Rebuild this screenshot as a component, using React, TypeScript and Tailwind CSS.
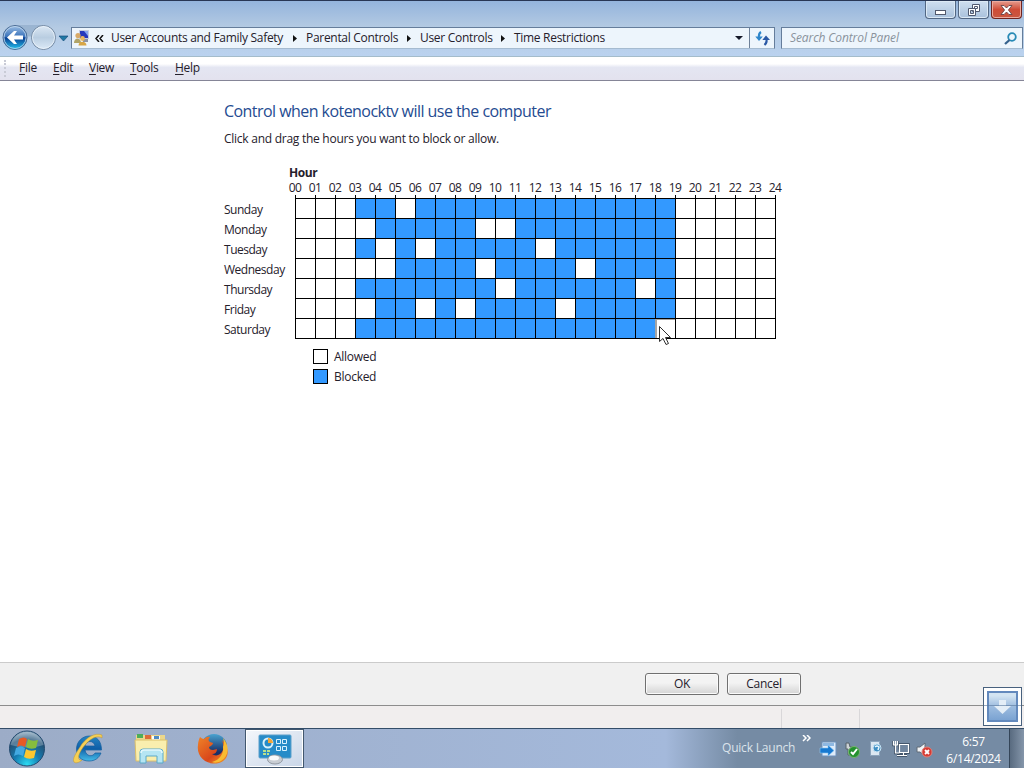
import React from 'react';

const HOURS = Array.from({ length: 25 }, (_, i) => i);

// allowed hours inside the blocked 03-19 range
const DAYS = [
  { name: 'Sunday', allowed: [5] },
  { name: 'Monday', allowed: [3, 9, 10] },
  { name: 'Tuesday', allowed: [4, 6, 12] },
  { name: 'Wednesday', allowed: [3, 4, 9, 14] },
  { name: 'Thursday', allowed: [10, 17] },
  { name: 'Friday', allowed: [3, 6, 8, 13] },
  { name: 'Saturday', allowed: [18] },
];

const CRUMBS = [
  { label: 'User Accounts and Family Safety', width: 'w-[195px]' },
  { label: 'Parental Controls', width: 'w-[114px]' },
  { label: 'User Controls', width: 'w-[94px]' },
  { label: 'Time Restrictions', width: 'w-[110px]' },
];

const MENU = [
  { label: 'File', width: 'w-[34px]' },
  { label: 'Edit', width: 'w-[36px]' },
  { label: 'View', width: 'w-[41px]' },
  { label: 'Tools', width: 'w-[45px]' },
  { label: 'Help', width: 'w-[40px]' },
];

const isBlocked = (hour: number, allowed: number[]) => hour >= 3 && hour < 19 && !allowed.includes(hour);

const UsersIcon = () => (
  <svg width="16" height="16" viewBox="0 0 16 16">
    <rect x="5.500" y=".5" width="9" height="8" fill="#2638bd" stroke="#c4cbe0" />
    <path d="M10 1h4v5z" fill="#87a5ee" />
    <path d="M9 9h5v3H9z" fill="#8d94a5" />
    <circle cx="4" cy="5.500" r="2.600" fill="#d8aa68" />
    <path d="M0 13c0-6 7-6 7 0z" fill="#b0a468" />
    <circle cx="8.500" cy="8.500" r="2.400" fill="#eab65e" />
    <path d="M4.500 15.500c0-5 8-5 8 0z" fill="#d7a545" />
  </svg>
);

const NavButtons = () => (
  <svg width="70" height="30" viewBox="0 0 70 30">
    <defs>
      <linearGradient id="back" x2="0" y2="1">
        <stop stopColor="#9dbfe4" />
        <stop offset=".46" stopColor="#3b73bb" />
        <stop offset=".52" stopColor="#093f92" />
        <stop offset="1" stopColor="#25c5f0" />
      </linearGradient>
      <linearGradient id="forward" x2="0" y2="1">
        <stop stopColor="#dce8f4" />
        <stop offset=".5" stopColor="#b9cde1" />
        <stop offset="1" stopColor="#dceaf7" />
      </linearGradient>
    </defs>
    <path d="M15 3h28v8q-14 7-28 0z" fill="#8da9c8" opacity=".65" />
    <circle cx="15" cy="15.500" r="12" fill="url(#back)" stroke="#4a6b95" />
    <circle cx="15" cy="15.500" r="11" fill="none" stroke="#c5dbef" strokeWidth=".8" />
    <path d="M7 15.500l7-6.500h3l-3 4.500h9v4h-9l3 4.500h-3z" fill="#fff" />
    <circle cx="43.500" cy="15.500" r="12" fill="url(#forward)" stroke="#7288a2" />
    <circle cx="43.500" cy="15.500" r="11" fill="none" stroke="#edf5fb" strokeWidth=".8" />
    <path d="M59 14h9l-4.500 5z" fill="#2079a5" stroke="#174e7d" strokeWidth=".7" />
  </svg>
);

const WindowButtons = () => (
  <div className="flex h-[18px] gap-[2px]">
    <div className="flex h-[18px] w-[31px] items-end justify-center rounded-b border border-t-0 border-[#526783] bg-linear-to-b from-[#cfdff0] to-[#a9c1dc] pb-[3px] shadow-[inset_0_0_0_1px_#dce9f5]">
      <div className="h-[5px] w-[11px] border border-[#52596c] bg-white" />
    </div>
    <div className="flex h-[18px] w-[31px] items-center justify-center rounded-b border border-t-0 border-[#526783] bg-linear-to-b from-[#cfdff0] to-[#a9c1dc] shadow-[inset_0_0_0_1px_#dce9f5]">
      <svg width="12" height="12" viewBox="0 0 12 12" fill="#fff" stroke="#505a70">
        <path d="M4.500 .5h7v7h-7zM6.500 2.500h3v2h-3z" />
        <path d="M.5 4.500h7v7h-7zM2.500 6.500h3v3h-3z" fillRule="evenodd" />
      </svg>
    </div>
    <div className="flex h-[18px] w-[31px] items-center justify-center rounded-b border border-t-0 border-[#70241f] bg-linear-to-b from-[#e59b8e] via-[#cf4c37] to-[#c95741] shadow-[inset_0_0_0_1px_#ecaa9e]">
      <svg width="13" height="12" viewBox="0 0 13 12">
        <path d="M1 1.500h3l2.500 2.500L9 1.500h3L8.400 6l3.600 4.500H9L6.500 8 4 10.500H1L4.600 6z" fill="#fff" stroke="#58393e" strokeWidth=".8" />
      </svg>
    </div>
  </div>
);

const RefreshIcon = () => (
  <svg width="15" height="15" viewBox="0 0 15 15" fill="none" strokeWidth="2.200">
    <path d="M6 1Q3.500 2.500 4 6" stroke="#2d86cb" /><path d="M.3 5.500h7.500L4 10z" fill="#2d86cb" />
    <path d="M9.500 14q2.500-2 2-5" stroke="#2a58a5" /><path d="M7.300 9h7.700L11 4.500z" fill="#2a58a5" />
  </svg>
);

const StartOrb = () => (
  <svg width="40" height="40" viewBox="0 0 40 40">
    <defs>
      <radialGradient id="orb" cx=".5" cy=".95" r=".95">
        <stop stopColor="#2bdbf2" /><stop offset=".4" stopColor="#157bb1" /><stop offset=".75" stopColor="#245174" /><stop offset="1" stopColor="#a0b8ca" />
      </radialGradient>
    </defs>
    <circle cx="20" cy="19.500" r="17.500" fill="url(#orb)" stroke="#244b70" />
    <path d="M3.500 16a17 17 0 0 1 33 0q-15 5-33 0" fill="#d7e5ee" opacity=".3" />
    <path d="M12 10q5-3 8 0l-2 8q-4-3-8 0z" fill="#e65a25" />
    <path d="M21 10q4 3 10 1l-2 8q-6 2-10-1z" fill="#86bd3e" />
    <path d="M9 19q5-3 9 0l-2 8q-5-3-9 0z" fill="#43a9e1" />
    <path d="M19 20q4 3 10 1l-2 8q-6 2-10-1z" fill="#fcc72f" />
  </svg>
);

const ExplorerE = () => (
  <svg width="34" height="32" viewBox="0 0 34 32">
    <defs>
      <linearGradient id="ie" x2="0" y2="1"><stop stopColor="#2585c4" /><stop offset=".5" stopColor="#0f5fa8" /><stop offset="1" stopColor="#45bce8" /></linearGradient>
    </defs>
    <path fillRule="evenodd" d="M17.500 3c7.500 0 12 5.500 12 14H13c1 7 8 7 10 3h6c-2 5-6 8-12 8C9 28 4.500 23 4.500 16S10 3 17.500 3zM13 13h10c-1-6-9-6-10 0z" fill="url(#ie)" stroke="#135d9d" strokeWidth=".7" />
    <path d="M30 2c-7-3-17 3-22 12C4 20 0 26 2 29c2 2 6 0 8-2-7 1-2-10 4-16C19 5 26 2 30 5z" fill="#f5cf55" stroke="#bd9733" strokeWidth=".5" />
  </svg>
);

const FolderIcon = () => (
  <svg width="34" height="32" viewBox="0 0 34 32">
    <path d="M2 2h29v24H2z" fill="#ecd78b" />
    <path d="M3 1h6v4H3z" fill="#4dac5b" /><path d="M11 2h6v4h-6z" fill="#dc6b39" /><path d="M18 3h8v4h-8z" fill="#fff" /><path d="M20 3h5v3h-5z" fill="#508bc4" />
    <path d="M1 7h32l-1 21H2z" fill="#f9eeae" stroke="#dcc06a" />
    <path d="M6 30V19q0-3 3-3h17q3 0 3 3v11h-6v-7H12v7z" fill="#b5e5f3" stroke="#5ba9c8" />
    <path d="M7 20q0-3 3-3h15q3 0 3 3" fill="none" stroke="#e4f8fc" strokeWidth="1.500" />
  </svg>
);

const FirefoxIcon = () => (
  <svg width="34" height="32" viewBox="0 0 34 32">
    <defs>
      <linearGradient id="globe" x2="0" y2="1"><stop stopColor="#4aa3d0" /><stop offset=".7" stopColor="#172f68" /></linearGradient>
      <linearGradient id="fox" x2="1" y2="1"><stop stopColor="#ef8328" /><stop offset=".6" stopColor="#d9471b" /><stop offset="1" stopColor="#f4a32a" /></linearGradient>
    </defs>
    <circle cx="18" cy="14" r="13" fill="url(#globe)" />
    <path d="M4 4q2 2 4 2 3-3 6-2-3 3 0 5l3 1q0 2-4 4 0 3 4 3l4-1q0 5-5 5c4 3 9 1 11-4 1-4 0-7-1-10 8 8 8 20-3 23C11 33 0 24 2 12c0-3 1-6 2-8z" fill="url(#fox)" />
    <path d="M27 5c7 8 6 18-2 23-3 2-7 2-9 1 8-2 12-9 11-15 1-3 1-6 0-9z" fill="#f8bb32" />
  </svg>
);

const ControlPanelIcon = () => (
  <svg width="36" height="32" viewBox="0 0 36 32">
    <rect x="2" y="2" width="32" height="23" rx="1" fill="#268bc8" stroke="#5a9fca" />
    <circle cx="11" cy="10" r="4.500" fill="none" stroke="#d9f1fb" strokeWidth="2" /><path d="M11 10V5a5 5 0 0 1 5 5z" fill="#f3a637" />
    <path d="M19.500 6.500h4v4h-4zM25.500 6.500h4v4h-4zM19.500 13.500h4v4h-4zM25.500 13.500h4v4h-4z" fill="none" stroke="#d9f2ff" />
    <path d="M6 18h7M6 21h6" stroke="#b8e08c" strokeWidth="2" strokeDasharray="3 1" />
    <ellipse cx="18" cy="26.500" rx="7.500" ry="4.500" fill="#c8cdd3" stroke="#9198a2" /><ellipse cx="17" cy="25" rx="5" ry="2.500" fill="#f8f9fa" />
  </svg>
);

const TrayIcons = () => (
  <svg width="118" height="20" viewBox="0 0 118 20">
    <path d="M3 2h14v14H3z" fill="#dfecf9" stroke="#6c91bd" /><path d="M4 3h11v3H4z" fill="#8eb8e2" /><path d="M1 8h8V5l6 5.500L9 16v-3H1z" fill="#1779d1" stroke="#8cc6f2" strokeWidth=".6" />
    <path d="M27 3h3l1 4h3v8h-5V9h-2z" fill="#cdd3d6" stroke="#59636b" /><circle cx="35" cy="12" r="5.500" fill="#24912f" stroke="#74b46d" /><path d="M32 12l2 2 4-5" fill="none" stroke="#fff" strokeWidth="2" />
    <path d="M51.500 1.500h9v14h-9z" fill="#dbe7f1" stroke="#8ba4bc" /><circle cx="58" cy="8" r="4" fill="#3e8fc4" stroke="#c8e3f3" /><path d="M56 7q2-2 4 0l-1 3" fill="none" stroke="#e6f8ff" strokeWidth="1.500" />
    <path d="M80.500 4.500h9v8h-9zM78 15.500h10M84.500 13v2M74.500 1v4h4V1M76.500 1v12h4" fill="none" stroke="#34465a" strokeWidth="2.500" />
    <path d="M80.500 4.500h9v8h-9zM78 15.500h10M84.500 13v2M74.500 1v4h4V1M76.500 1v12h4" fill="#71869f" stroke="#fff" strokeWidth="1.200" />
    <path d="M98 7h3l5-4v13l-5-4h-3z" fill="#f1f3f5" stroke="#606b77" /><circle cx="108" cy="12" r="5" fill="#d73a32" stroke="#df817a" /><path d="M106 10l4 4m0-4l-4 4" stroke="#fff" strokeWidth="1.800" />
  </svg>
);

const Schedule = () => (
  <div className="mt-[18px]">
    <div className="ml-[65px] h-[15px] leading-[15px] font-bold tracking-[-0.4px]">Hour</div>
    <div className="ml-[61px] flex h-[15px] leading-[15px] tracking-[-0.5px]">
      {HOURS.map(h => <span key={h} className="flex w-5 shrink-0 justify-center">{String(h).padStart(2, '0')}</span>)}
    </div>
    <div className="ml-[71px] flex h-[3px]">
      {HOURS.map(h => <span key={h} className="w-5 border-l border-black" />)}
    </div>
    {DAYS.map((day, row) => (
      <div key={day.name} className="flex h-5">
        <span className="w-[71px] pt-[3px] leading-[17px] tracking-[-0.48px]">{day.name}</span>
        <div className={`flex border-l border-t border-black ${row === 6 ? 'h-[21px] border-b' : 'h-5'}`}>
          {HOURS.slice(0, 24).map(h => (
            <div
              key={h}
              className={`w-5 border-r ${row === 6 && h === 17 ? 'border-[#a5a5a5]' : 'border-black'} ${isBlocked(h, day.allowed) ? 'bg-[#3399ff]' : 'bg-white'} ${row === 6 && h === 18 ? 'shadow-[inset_1px_1px_0_#a5a5a5]' : ''}`}
            />
          ))}
        </div>
      </div>
    ))}
  </div>
);

export default function App() {
  return (
    <div className="relative flex h-[768px] w-[1024px] flex-col overflow-hidden bg-white font-['Open_Sans',sans-serif] text-[12px] tracking-[-0.28px] text-[#25202b]">
      <header className="h-[57px] border-t border-b border-t-[#283654] border-b-[#a4bccb] bg-linear-to-b from-[#94b4dc] via-[#b5cbe3] to-[#bad2ef]">
        <div className="flex h-[18px] justify-end pr-[2px]"><WindowButtons /></div>
        <div className="flex h-[37px] items-start">
          <div className="mt-[3px] h-[30px] w-[71px]"><NavButtons /></div>
          <div className="mt-2 flex h-[22px] w-[704px] items-center border border-[#657d9b] border-b-[#a5bbd0] bg-[#edf5fc] pl-[2px] tracking-[-0.3px]">
            <UsersIcon />
            <svg width="9" height="7" className="mr-[7px] ml-[5px]"><path d="M4 0L1 3.500 4 7M8 0L5 3.500 8 7" fill="none" stroke="#111" strokeWidth="1.500" /></svg>
            {CRUMBS.map((c, i) => (
              <div key={c.label} className={`flex shrink-0 items-center justify-between ${c.width}`}>
                <span>{c.label}</span>
                {i < 3 && <svg width="5" height="7" className="mr-2"><path d="M0 0v7l4-3.500z" fill="#111" /></svg>}
              </div>
            ))}
            <svg width="9" height="5" className="mr-[5px] ml-auto"><path d="M0 0h8L4 4z" fill="#151929" /></svg>
            <div className="flex h-full w-[25px] items-center justify-center border-l border-[#6e8199]"><RefreshIcon /></div>
          </div>
          <div className="mt-2 ml-[6px] flex h-[22px] w-[242px] items-center justify-between border border-[#657d9b] border-b-[#a5bbd0] bg-[#edf5fc] pr-[5px] pl-2 text-[#8a939c] italic">
            <span className="tracking-[-0.1px]">Search Control Panel</span>
            <svg width="13" height="13" fill="none"><circle cx="8" cy="5" r="3.800" stroke="#278ab6" strokeWidth="1.800" /><path d="M5.500 8L1 12" stroke="#35628d" strokeWidth="2.300" /></svg>
          </div>
        </div>
      </header>
      <nav className="flex h-[24px] items-center border-b border-[#858597] bg-linear-to-b from-white from-30% via-[#e4e6f2] via-45% to-[#e3e2ee] pb-px">
        <div className="mr-[13px] ml-1 h-[17px] border-l-2 border-dotted border-[#c9cbd6]" />
        {MENU.map(m => <span key={m.label} className={m.width}><u className="underline-offset-2">{m.label[0]}</u>{m.label.slice(1)}</span>)}
      </nav>

      <main className="h-[581px] pt-[19px] pl-[224px]">
        <h1 className="h-[22px] text-[16px] leading-[22px] tracking-[-0.55px] text-[#254b91]">Control when kotenocktv will use the computer</h1>
        <p className="mt-[9px] h-[16px] leading-[16px] tracking-[-0.26px]">Click and drag the hours you want to block or allow.</p>
        <Schedule />
        <div className="mt-[11px] ml-[89px] flex flex-col gap-[5px]">
          <div className="flex h-[15px] items-center gap-[6px]"><i className="size-[15px] border border-black" />Allowed</div>
          <div className="flex h-[15px] items-center gap-[6px]"><i className="size-[15px] border border-black bg-[#3399ff]" />Blocked</div>
        </div>
      </main>

      <footer className="flex h-[43px] gap-2 border-t border-[#cbcbcb] bg-[#f0f0f0] pt-[10px] pl-[645px]">
        {['OK', 'Cancel'].map(label => (
          <button key={label} className="h-[22px] w-[74px] rounded-[3px] border border-[#707070] bg-linear-to-b from-[#f3f3f3] from-45% to-[#d4d4d4] leading-none shadow-[inset_0_0_0_1px_#fafafa]">{label}</button>
        ))}
      </footer>
      <div className="flex h-[23px] border-t border-[#8d8d8d] bg-[#f1eeee] pt-[3px]">
        <div className="w-[782px] border-r border-[#d9d7d9]" /><div className="w-[78px] border-r border-[#d9d7d9]" />
      </div>

      <div className="flex h-[40px] border-t border-[#344d68] bg-linear-to-r from-[#9cacc7] via-[#a4b9db] via-65% to-[#758ba4] to-72% text-white">
        <div className="flex w-[304px] items-center">
          <div className="w-[57px] pl-[7px]"><StartOrb /></div>
          <div className="w-[62px] pl-[15px]"><ExplorerE /></div>
          <div className="w-[62px] pl-[15px]"><FolderIcon /></div>
          <div className="w-[64px] pl-[15px]"><FirefoxIcon /></div>
          <div className="flex h-[39px] w-[59px] items-center justify-center border border-[#42576e] bg-linear-to-br from-[#f4f7fb] to-[#c9d6e8] shadow-[inset_0_0_0_1px_#fff]"><ControlPanelIcon /></div>
        </div>
        <div className="ml-auto flex h-full items-start">
          <span className="mt-[10px] w-[80px] tracking-[-0.2px] text-[#dbe3eb]">Quick Launch</span>
          <svg width="9" height="7" className="mt-[6px] mr-[8px]"><path d="M1 0l3 3-3 3M5 0l3 3-3 3" fill="none" stroke="#fff" strokeWidth="1.500" /></svg>
          <div className="mt-[11px] w-[122px]"><TrayIcons /></div>
          <div className="mt-[4px] w-[68px] pr-[3px] text-center leading-[17px]">6:57<br />6/14/2024</div>
          <div className="h-full w-[15px] border-l border-[#344558] bg-linear-to-r from-[#596b80] to-[#8596aa]" />
        </div>
      </div>

      <div className="absolute top-[687px] left-[983px] size-[39px] border border-[#48617e] bg-white p-[3px]">
        <div className="flex h-full items-center justify-center border-2 border-[#6389bd] bg-linear-to-b from-[#d3e4f2] from-10% via-[#9dbcdf] to-[#7ba3d2]">
          <svg width="17" height="16"><path d="M5 1h7v6h5l-8.500 8L0 7h5z" fill="#e4eef7" /></svg>
        </div>
        <div className="absolute top-[17px] left-0 h-px w-full bg-[#58779b]/60" />
      </div>
      <svg className="absolute top-[326px] left-[659px]" width="13" height="20" viewBox="0 0 13 20"><path d="M.5 .5v15l3.500-3 3 6 2.500-1-3-6h5z" fill="#fff" stroke="#303030" /></svg>
    </div>
  );
}
